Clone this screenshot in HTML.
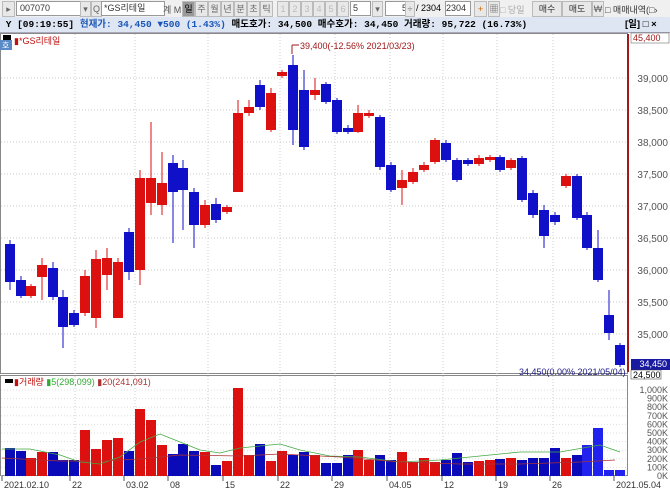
<!DOCTYPE html>
<html><head><meta charset="utf-8"><style>
body{margin:0;width:670px;height:490px;overflow:hidden;background:#fff;font-family:"Liberation Sans","Noto Sans CJK KR",sans-serif;font-size:10px;position:relative}
.tb{position:absolute;left:0;top:0;width:670px;height:17px;background:#f0f0f0}
.ib{position:absolute;left:0;top:17px;width:670px;height:15px;background:#dde6f2;border-bottom:1px solid #aab;font-family:"Liberation Mono","Noto Sans CJK KR",monospace;font-size:9.5px;line-height:15px;font-weight:bold;color:#000;white-space:pre;overflow:hidden}
.box{position:absolute;background:#fff;border:1px solid #999;height:13px;top:1px;font-size:9px;line-height:13px;color:#333}
.btn{position:absolute;top:1px;height:14px;background:#e8e8e8;border:1px solid #bbb;font-size:9px;line-height:14px;text-align:center;color:#666}
</style></head><body>
<div class="tb">
<div class="btn" style="left:2px;width:11px">▸</div>
<div class="box" style="left:16px;width:60px;padding-left:3px">007070</div>
<div class="btn" style="left:80px;width:9px">▾</div>
<div class="btn" style="left:91px;width:9px">Q</div>
<div class="box" style="left:101px;width:60px;padding-left:2px">*GS리테일</div>
<div style="position:absolute;left:163px;top:3px;font-size:9px;color:#555">계 M</div>
<div class="btn" style="left:182px;width:11px;background:#999;color:#000">일</div>
<div class="btn" style="left:195px;width:11px">주</div>
<div class="btn" style="left:208px;width:11px">월</div>
<div class="btn" style="left:221px;width:11px">년</div>
<div class="btn" style="left:234px;width:11px">분</div>
<div class="btn" style="left:247px;width:11px">초</div>
<div class="btn" style="left:260px;width:11px">틱</div>
<div class="btn" style="left:277px;width:10px;color:#bbb">1</div>
<div class="btn" style="left:289px;width:10px;color:#bbb">2</div>
<div class="btn" style="left:301px;width:10px;color:#bbb">3</div>
<div class="btn" style="left:313px;width:10px;color:#bbb">4</div>
<div class="btn" style="left:325px;width:10px;color:#bbb">5</div>
<div class="btn" style="left:337px;width:10px;color:#bbb">6</div>
<div class="box" style="left:350px;width:17px;padding-left:2px">5</div>
<div class="btn" style="left:372px;width:9px">▾</div>
<div class="box" style="left:385px;width:26px;text-align:right">57</div>
<div class="btn" style="left:405px;width:8px">÷</div>
<div style="position:absolute;left:416px;top:3px;font-size:9px">/ 2304</div>
<div class="box" style="left:445px;width:24px">2304</div>
<div class="btn" style="left:474px;width:11px;color:#c60">+</div>
<div class="btn" style="left:488px;width:10px">▦</div>
<div style="position:absolute;left:500px;top:3px;font-size:9px;color:#aaa">□ 당일</div>
<div class="btn" style="left:532px;width:28px;color:#333">매수</div>
<div class="btn" style="left:562px;width:28px;color:#333">매도</div>
<div class="btn" style="left:592px;width:10px">₩</div>
<div style="position:absolute;left:605px;top:3px;font-size:9px;color:#333">□ 매매내역(□›</div>
</div>
<div class="ib"> Y [09:19:55] <span style="color:#1a55b8">현재가: 34,450 ▼500 (1.43%)</span> 매도호가: 34,500 매수호가: 34,450 거래량: 95,722 (16.73%)</div>
<div style="position:absolute;left:622px;top:17px;height:15px;line-height:15px;font-size:9.5px;font-weight:bold;background:#dde6f2;padding:0 3px;white-space:pre">[일] □ ×</div>
<svg id="s" width="670" height="458" style="position:absolute;left:0;top:32px" xmlns="http://www.w3.org/2000/svg"></svg>
<script>
var s=document.getElementById('s'),h='';
function Y(p){return 78-32+(39000-p)*0.064;}
h+='<rect x="0.5" y="1.5" width="627" height="340" fill="none" stroke="#888"/>';
h+='<rect x="0.5" y="343.5" width="627" height="100" fill="none" stroke="#888"/>';
var xs=[75,135,208,280,335,390,443,497,553];
xs.forEach(function(x){h+='<line x1="'+x+'" y1="2" x2="'+x+'" y2="443" stroke="#ccc" stroke-dasharray="1,2"/>';});
for(var p=35000;p<=39000;p+=500){var y=Y(p);h+='<line x1="1" y1="'+y+'" x2="627" y2="'+y+'" stroke="#ccc" stroke-dasharray="1,2"/><text x="668" y="'+(y+4)+'" text-anchor="end" font-size="10" fill="#555">'+(p/1000).toFixed(3).replace('.',',')+'</text>';}
for(var v=0;v<=10;v++){var y=444-v*8.6;h+='<line x1="1" y1="'+y+'" x2="627" y2="'+y+'" stroke="#ddd" stroke-dasharray="1,2"/><text x="668" y="'+(y+3)+'" text-anchor="end" font-size="9" fill="#555">'+(v==0?'0K':(v==10?'1,000K':v*100+'K'))+'</text>';}
var C=[[10,244,282,240,290,'b'],[21,280,296,276,298,'b'],[31,286,296,284,298,'r'],[42,265,277,258,300,'r'],[53,268,297,262,300,'b'],[63,297,327,290,348,'b'],[74,313,325,310,327,'b'],[85,276,313,270,316,'r'],[96,259,318,250,328,'r'],[107,258,275,248,290,'r'],[118,262,318,258,318,'r'],[129,232,272,228,280,'b'],[140,178,270,170,285,'r'],[151,178,203,122,215,'r'],[162,183,205,152,215,'r'],[173,163,192,155,243,'b'],[183,168,190,160,230,'b'],[194,192,225,188,248,'b'],[205,205,225,200,228,'r'],[216,204,220,198,223,'b'],[227,207,212,205,214,'r'],[238,113,192,100,192,'r'],[249,107,113,100,116,'r'],[260,85,107,80,110,'b'],[271,93,130,88,132,'r'],[282,72,76,70,78,'r'],[293,65,130,55,145,'b'],[304,90,147,70,150,'b'],[315,90,95,78,100,'r'],[326,84,102,82,104,'b'],[337,100,132,98,134,'b'],[348,128,132,125,134,'b'],[358,113,132,105,133,'r'],[369,113,116,110,118,'r'],[380,117,167,115,170,'b'],[391,165,190,162,192,'b'],[402,180,188,170,205,'r'],[413,172,182,168,184,'r'],[424,165,170,162,172,'r'],[435,140,162,138,164,'r'],[446,143,160,140,162,'b'],[457,160,180,158,182,'b'],[468,160,164,158,166,'b'],[479,158,164,155,166,'r'],[490,157,160,155,162,'r'],[500,157,170,155,172,'b'],[511,160,168,158,170,'r'],[522,158,200,156,202,'b'],[533,193,215,190,218,'b'],[544,210,236,205,248,'b'],[555,215,222,212,225,'b'],[566,176,186,174,188,'r'],[577,176,218,174,220,'b'],[587,215,248,212,250,'b'],[598,248,280,230,282,'b'],[609,315,333,290,340,'b'],[620,345,365,343,367,'b']];
var V=[448,451,458,452,452,460,460,430,449,440,438,451,409,420,445,454,444,451,452,465,461,388,455,444,461,451,455,452,455,463,463,455,450,460,455,460,452,462,458,462,460,453,462,461,460,459,458,460,458,458,448,458,455,445,428,470,470];
C.forEach(function(c,i){var col=c[5]=='r'?'#dd1010':'#1010c8';var o=-32;
h+='<line x1="'+c[0]+'" y1="'+(c[3]+o)+'" x2="'+c[0]+'" y2="'+(c[4]+o)+'" stroke="'+col+'"/>';
h+='<rect x="'+(c[0]-5)+'" y="'+(c[1]+o)+'" width="10" height="'+Math.max(2,c[2]-c[1])+'" fill="'+col+'"/>';
var vt=V[i]-32;var vc=c[5]=='r'?'#dd1010':(i>=53?'#2222ee':'#0a0ab8');h+='<rect x="'+(c[0]-5)+'" y="'+vt+'" width="10" height="'+(444-vt)+'" fill="'+vc+'"/>';});
h+='<polyline points="2,417 30,417 60,423 80,430 100,432 120,425 140,410 160,402 180,410 200,418 220,421 240,416 260,414 280,412 300,418 330,424 360,425 400,430 440,428 480,424 520,420 560,420 600,413 620,420" fill="none" stroke="#4a4" stroke-width="0.8"/>';
h+='<polyline points="2,426 60,429 100,429 140,427 180,423 240,424 280,422 340,425 400,430 460,432 520,432 580,430 615,428" fill="none" stroke="#a33" stroke-width="0.8"/>';
h+='<line x1="628" y1="2" x2="628" y2="340" stroke="#a01818" stroke-width="2"/>';
h+='<rect x="631" y="1" width="38" height="10" fill="#fff" stroke="#555" stroke-width="0.5"/><text x="633" y="9" font-size="9" fill="#a01818">45,400</text>';
h+='<rect x="631" y="327" width="39" height="11" fill="#1a1aa0"/><text x="667" y="335" text-anchor="end" font-size="9" fill="#fff">34,450</text>';
h+='<rect x="631" y="338" width="30" height="9" fill="#fff" stroke="#333" stroke-width="0.5"/><text x="633" y="346" font-size="9">24,500</text>';
h+='<text x="300" y="17" font-size="9" fill="#a01818">39,400(-12.56% 2021/03/23)</text><line x1="292" y1="13" x2="299" y2="13" stroke="#a01818"/><line x1="292" y1="13" x2="292" y2="22" stroke="#a01818"/>';
h+='<text x="519" y="343" font-size="9" fill="#1a1a80">34,450(0.00% 2021/05/04)</text>';
h+='<rect x="3" y="3" width="8" height="5" fill="#000"/><rect x="0" y="8" width="12" height="10" fill="#5a8ac8"/><text x="2" y="16" font-size="8" fill="#fff">호</text><text x="14" y="12" font-size="9" fill="#c01010">▮*GS리테일</text>';
h+='<rect x="5" y="347" width="8" height="4" fill="#000"/><text x="14" y="353" font-size="9"><tspan fill="#c01010">▮거래량 </tspan><tspan fill="#3a3">▮5(298,099) </tspan><tspan fill="#a33">▮20(241,091)</tspan></text>';
[[2,'2021.02.10'],[70,'22'],[124,'03.02'],[168,'08'],[223,'15'],[278,'22'],[332,'29'],[387,'04.05'],[442,'12'],[496,'19'],[550,'26'],[614,'2021.05.04']].forEach(function(d){h+='<line x1="'+d[0]+'" y1="444" x2="'+d[0]+'" y2="449" stroke="#555"/><text x="'+(d[0]+2)+'" y="456" font-size="9" fill="#333">'+d[1]+'</text>';});
s.innerHTML=h;
</script>
</body></html>
